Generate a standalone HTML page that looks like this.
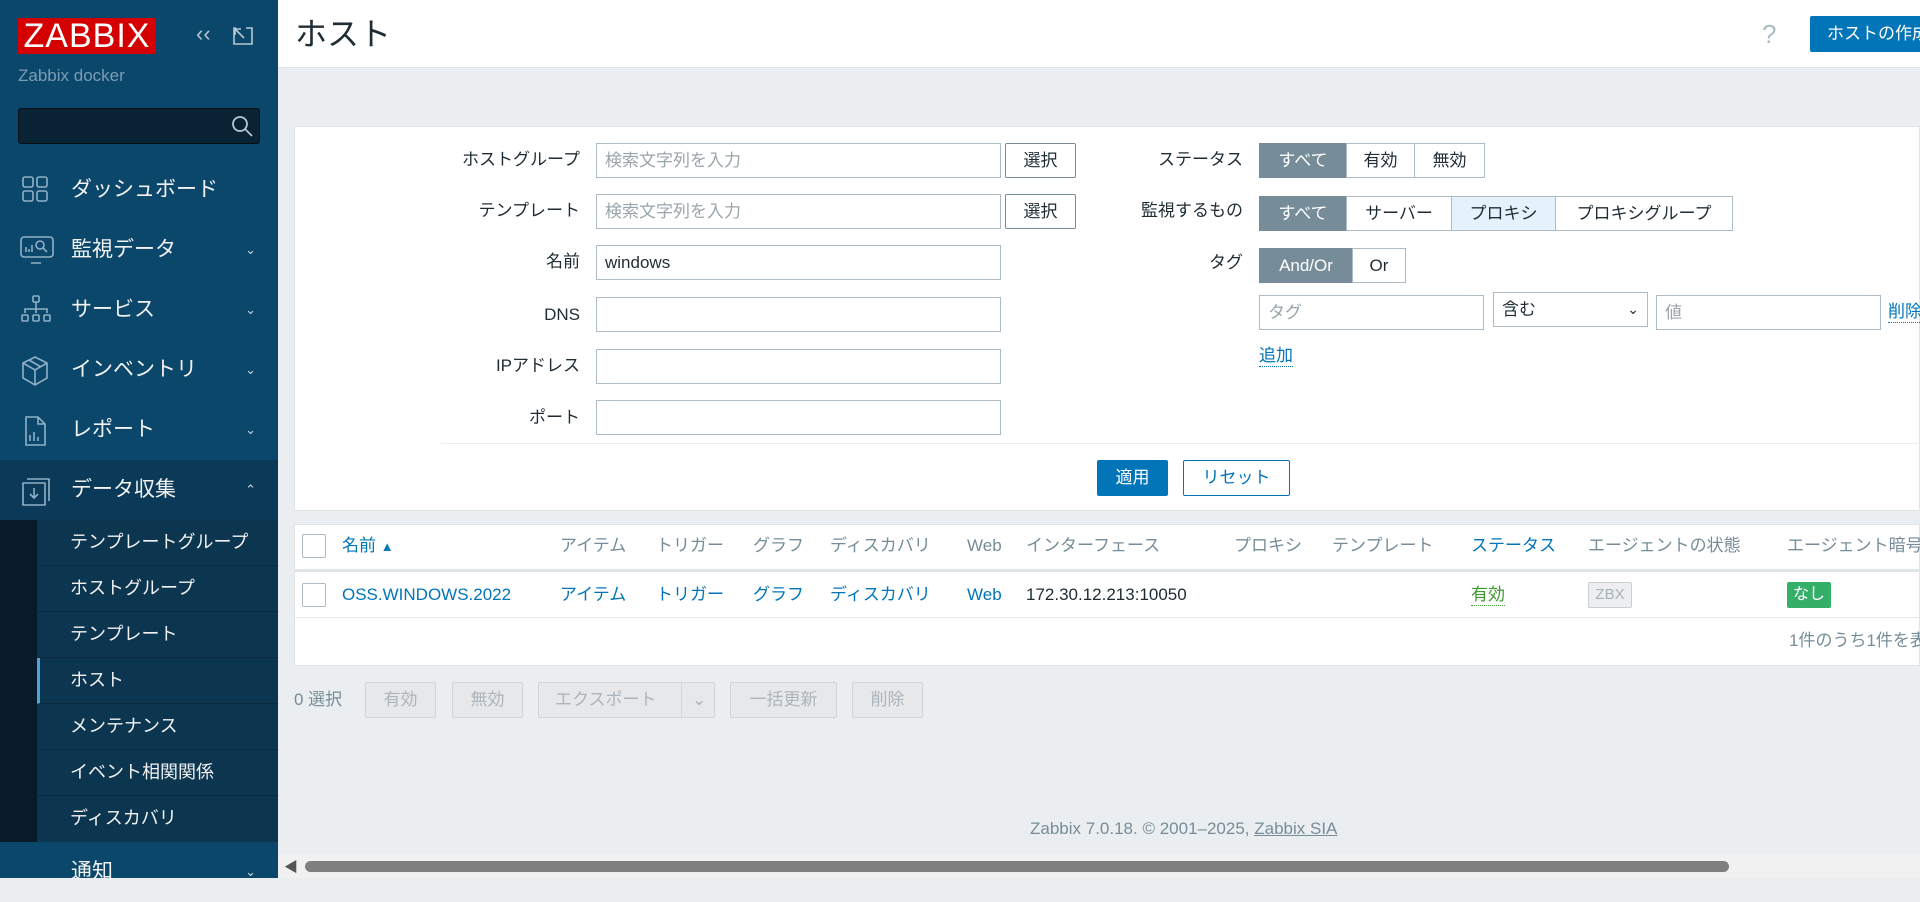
<!DOCTYPE html>
<html><head><meta charset="utf-8"><style>
*{box-sizing:border-box;margin:0;padding:0}
body{width:1920px;height:878px;overflow:hidden;background:#ebeef0;font-family:"Liberation Sans","Noto Sans CJK JP",sans-serif;position:relative;color:#1f2c33;line-height:20px}
.a{position:absolute;white-space:nowrap}
#side{left:0;top:0;width:278px;height:878px;background:#0b476b}
.mi{position:absolute;left:0;width:278px;height:60px;color:#f2f2f2;font-size:21px;line-height:60px;padding-left:71px}
.mi svg{position:absolute;left:20px;top:15px}
.chev{position:absolute;right:22px;top:0;font-size:13px;color:#c8d4dc}
.sub{position:absolute;left:37px;width:241px;height:46px;line-height:45px;color:#f2f2f2;font-size:18px;padding-left:33px;border-bottom:1px solid #0b2a3d}
.lbl{position:absolute;font-size:17px;text-align:right;width:200px;color:#1f2c33;line-height:20px}
.in{position:absolute;height:35px;border:1px solid #acbbc4;background:#fff;font-size:17px;padding-left:8px;line-height:33px;color:#1f2c33}
.ph{color:#9aa5ab}
.btn{position:absolute;height:35px;border:1px solid #768d99;background:#fff;font-size:17px;text-align:center;line-height:33px;border-radius:2px}
.seg{position:absolute;height:35px;border:1px solid #acbbc4;font-size:17px;text-align:center;line-height:33px;background:#fff}
.seg.on{background:#768d99;color:#fff;border-color:#768d99}
.th{position:absolute;top:536px;font-size:17px;color:#768d99;line-height:20px;white-space:nowrap}
.td{position:absolute;top:585px;font-size:17px;color:#0275b8;line-height:20px;white-space:nowrap}
.bb{position:absolute;top:682px;height:36px;border:1px solid #cfd6da;background:#e6e8ea;color:#acb5bb;font-size:17px;text-align:center;line-height:34px;border-radius:2px}
</style></head><body>
<div id="side" class="a">
 <div class="a" style="left:18px;top:18px;width:138px;height:36px;background:#d40000;color:#fff;font-size:34px;line-height:37px;text-align:center;letter-spacing:1px">ZABBIX</div>
 <div class="a" style="left:196px;top:24px;color:#b8c7d1;font-size:22px">&lsaquo;&lsaquo;</div>
 <svg class="a" style="left:232px;top:26px" width="22" height="20" viewBox="0 0 22 20" fill="none" stroke="#b8c7d1" stroke-width="1.6"><path d="M4 2h-2v16h18v-16h-6M3 3l9 9M3 3v6M3 3h6"/></svg>
 <div class="a" style="left:18px;top:66px;color:#7a9db4;font-size:17px">Zabbix docker</div>
 <div class="a" style="left:18px;top:108px;width:242px;height:36px;background:#0a2334;border:1px solid #030e16;border-radius:3px"></div>
 <svg class="a" style="left:230px;top:114px" width="24" height="24" viewBox="0 0 24 24" fill="none" stroke="#b8c7d1" stroke-width="1.8"><circle cx="10" cy="10" r="7"/><path d="M15 15l7 7"/></svg>
 <div class="mi" style="top:160px"><svg width="30" height="30" viewBox="0 0 30 30" fill="none" stroke="#8fb0c6" stroke-width="1.6"><rect x="3" y="2" width="10" height="10" rx="2"/><rect x="17" y="2" width="10" height="10" rx="2"/><rect x="3" y="16" width="10" height="10" rx="2"/><rect x="17" y="16" width="10" height="10" rx="2"/></svg>ダッシュボード</div>
 <div class="mi" style="top:220px"><svg width="34" height="30" viewBox="0 0 34 30" fill="none" stroke="#8fb0c6" stroke-width="1.6"><rect x="1" y="2" width="32" height="20" rx="3"/><path d="M11 28h10M6 17v-5M9 17v-3M12 17v-7"/><circle cx="20" cy="10" r="4"/><path d="M23 13l4 4"/></svg>監視データ<span class="chev">&#8964;</span></div>
 <div class="mi" style="top:280px"><svg width="32" height="30" viewBox="0 0 32 30" fill="none" stroke="#8fb0c6" stroke-width="1.6"><rect x="13" y="1" width="6" height="6" rx="1"/><path d="M16 7v7M5 18v-4h22v4M16 14v4"/><rect x="2" y="20" width="6" height="6" rx="1"/><rect x="13" y="20" width="6" height="6" rx="1"/><rect x="24" y="20" width="6" height="6" rx="1"/></svg>サービス<span class="chev">&#8964;</span></div>
 <div class="mi" style="top:340px"><svg width="30" height="32" viewBox="0 0 30 32" fill="none" stroke="#8fb0c6" stroke-width="1.6"><path d="M15 2l12 6v15l-12 7-12-7v-15zM3 8l12 7 12-7M15 15v15M9 5l12 7"/></svg>インベントリ<span class="chev">&#8964;</span></div>
 <div class="mi" style="top:400px"><svg width="30" height="32" viewBox="0 0 30 32" fill="none" stroke="#8fb0c6" stroke-width="1.6"><path d="M6 2h12l7 7v21h-19zM18 2v7h7M10 26v-6M14 26v-9M18 26v-4"/></svg>レポート<span class="chev">&#8964;</span></div>
 <div class="mi" style="top:460px;background:#0a3a57"><svg width="32" height="32" viewBox="0 0 32 32" fill="none" stroke="#8fb0c6" stroke-width="1.6"><path d="M7 4h22v22M3 8h22v22h-22zM14 13v10M10 19l4 4 4-4"/></svg>データ収集<span class="chev">&#8963;</span></div>
 <div class="a" style="left:0;top:520px;width:37px;height:322px;background:#071b28"></div>
 <div class="a" style="left:37px;top:520px;width:241px;height:322px;background:#0c3550"></div>
 <div class="sub" style="top:520px">テンプレートグループ</div>
 <div class="sub" style="top:566px">ホストグループ</div>
 <div class="sub" style="top:612px">テンプレート</div>
 <div class="sub" style="top:658px;border-left:3px solid #4fa3d8;padding-left:30px;background:#0c3550">ホスト</div>
 <div class="sub" style="top:704px">メンテナンス</div>
 <div class="sub" style="top:750px">イベント相関関係</div>
 <div class="sub" style="top:796px;border:none">ディスカバリ</div>
 <div class="mi" style="top:842px;line-height:60px">通知<span class="chev">&#8964;</span></div>
</div>
<div class="a" style="left:278px;top:0;width:1642px;height:68px;background:#fff;border-bottom:1px solid #dfe4e7"></div>
<div class="a" style="left:295px;top:16px;font-size:32px;line-height:36px">ホスト</div>
<div class="a" style="left:1762px;top:20px;font-size:26px;color:#acbbc4;line-height:28px">?</div>
<div class="a" style="left:1810px;top:16px;width:120px;height:36px;background:#0275b8;color:#fff;font-size:17px;line-height:36px;padding-left:17px;border-radius:2px">ホストの作成</div>

<div class="a" style="left:294px;top:126px;width:1626px;height:385px;background:#fff;border:1px solid #dfe4e7"></div>
<div class="lbl" style="left:380px;top:150px">ホストグループ</div>
<div class="lbl" style="left:380px;top:201px">テンプレート</div>
<div class="lbl" style="left:380px;top:252px">名前</div>
<div class="lbl" style="left:380px;top:305px">DNS</div>
<div class="lbl" style="left:380px;top:356px">IPアドレス</div>
<div class="lbl" style="left:380px;top:408px">ポート</div>
<div class="in ph" style="left:596px;top:143px;width:405px">検索文字列を入力</div>
<div class="in ph" style="left:596px;top:194px;width:405px">検索文字列を入力</div>
<div class="in" style="left:596px;top:245px;width:405px">windows</div>
<div class="in" style="left:596px;top:297px;width:405px"></div>
<div class="in" style="left:596px;top:349px;width:405px"></div>
<div class="in" style="left:596px;top:400px;width:405px"></div>
<div class="btn" style="left:1005px;top:143px;width:71px">選択</div>
<div class="btn" style="left:1005px;top:194px;width:71px">選択</div>
<div class="lbl" style="left:1043px;top:150px">ステータス</div>
<div class="lbl" style="left:1043px;top:201px">監視するもの</div>
<div class="lbl" style="left:1043px;top:253px">タグ</div>
<div class="seg on" style="left:1259px;top:143px;width:88px">すべて</div>
<div class="seg" style="left:1346px;top:143px;width:69px">有効</div>
<div class="seg" style="left:1414px;top:143px;width:71px">無効</div>
<div class="seg on" style="left:1259px;top:196px;width:88px">すべて</div>
<div class="seg" style="left:1346px;top:196px;width:106px">サーバー</div>
<div class="seg" style="left:1451px;top:196px;width:105px;background:#e5f1fb">プロキシ</div>
<div class="seg" style="left:1555px;top:196px;width:178px">プロキシグループ</div>
<div class="seg on" style="left:1259px;top:248px;width:94px">And/Or</div>
<div class="seg" style="left:1352px;top:248px;width:54px">Or</div>
<div class="in ph" style="left:1259px;top:295px;width:225px">タグ</div>
<div class="in" style="left:1493px;top:292px;width:155px">含む<span style="position:absolute;right:8px;font-size:14px">&#8964;</span></div>
<div class="in ph" style="left:1656px;top:295px;width:225px">値</div>
<div class="a" style="left:1888px;top:302px;font-size:17px;color:#0275b8;border-bottom:1px dotted #0275b8">削除</div>
<div class="a" style="left:1259px;top:346px;font-size:17px;color:#0275b8;border-bottom:1px dotted #0275b8">追加</div>
<div class="a" style="left:441px;top:443px;width:1479px;height:1px;background:#ebeef0"></div>
<div class="a" style="left:1097px;top:460px;width:71px;height:36px;background:#0275b8;color:#fff;font-size:17px;text-align:center;line-height:36px;border-radius:2px">適用</div>
<div class="btn" style="left:1183px;top:460px;width:107px;height:36px;border-color:#0275b8;color:#0275b8">リセット</div>

<div class="a" style="left:294px;top:524px;width:1626px;height:142px;background:#fff;border:1px solid #dfe4e7"></div>
<div class="a" style="left:294px;top:569px;width:1626px;height:3px;background:#dfe4e7"></div>
<div class="a" style="left:294px;top:617px;width:1626px;height:1px;background:#e6e9eb"></div>
<div class="a" style="left:302px;top:534px;width:24px;height:24px;border:1px solid #acbbc4;border-radius:2px"></div>
<div class="a" style="left:302px;top:583px;width:24px;height:24px;border:1px solid #acbbc4;border-radius:2px"></div>
<div class="th" style="left:342px;color:#0275b8">名前 <span style="font-size:13px">&#9650;</span></div>
<div class="th" style="left:560px">アイテム</div><div class="th" style="left:656px">トリガー</div><div class="th" style="left:753px">グラフ</div><div class="th" style="left:830px">ディスカバリ</div><div class="th" style="left:967px">Web</div><div class="th" style="left:1026px">インターフェース</div><div class="th" style="left:1234px">プロキシ</div><div class="th" style="left:1332px">テンプレート</div><div class="th" style="left:1471px;color:#0275b8">ステータス</div><div class="th" style="left:1588px">エージェントの状態</div><div class="th" style="left:1787px">エージェント暗号化</div>
<div class="td" style="left:342px">OSS.WINDOWS.2022</div><div class="td" style="left:560px">アイテム</div><div class="td" style="left:656px">トリガー</div><div class="td" style="left:753px">グラフ</div><div class="td" style="left:830px">ディスカバリ</div><div class="td" style="left:967px">Web</div><div class="td" style="left:1026px;color:#1f2c33">172.30.12.213:10050</div>
<div class="td" style="left:1471px;color:#3c9a2f;border-bottom:1px dotted #3c9a2f">有効</div>
<div class="a" style="left:1588px;top:582px;width:44px;height:26px;border:1px solid #c8d0d4;background:#eceeef;color:#a8b2b8;font-size:15px;text-align:center;line-height:24px;border-radius:2px">ZBX</div>
<div class="a" style="left:1787px;top:582px;width:44px;height:26px;background:#34af67;color:#fff;font-size:16px;text-align:center;line-height:26px;border-radius:2px">なし</div>
<div class="a" style="left:1789px;top:631px;font-size:17px;color:#768d99">1件のうち1件を表示</div>

<div class="a" style="left:294px;top:690px;font-size:17px;color:#768d99">0 選択</div>
<div class="bb" style="left:365px;width:71px">有効</div>
<div class="bb" style="left:452px;width:71px">無効</div>
<div class="bb" style="left:538px;width:177px;text-align:left;padding-left:16px">エクスポート<span style="position:absolute;left:142px;top:0;height:34px;border-left:1px solid #cfd6da;padding-left:10px">&#8964;</span></div>
<div class="bb" style="left:730px;width:107px">一括更新</div>
<div class="bb" style="left:852px;width:71px">削除</div>
<div class="a" style="left:1030px;top:819px;font-size:17px;color:#768d99">Zabbix 7.0.18. © 2001–2025, <span style="text-decoration:underline">Zabbix SIA</span></div>
<div class="a" style="left:278px;top:855px;width:1642px;height:23px;background:#f1f1f1"></div>
<div class="a" style="left:305px;top:861px;width:1424px;height:11px;background:#7f7f7f;border-radius:6px"></div>
<div class="a" style="left:284px;top:857px;font-size:14px;color:#555">&#9664;</div>
</body></html>
